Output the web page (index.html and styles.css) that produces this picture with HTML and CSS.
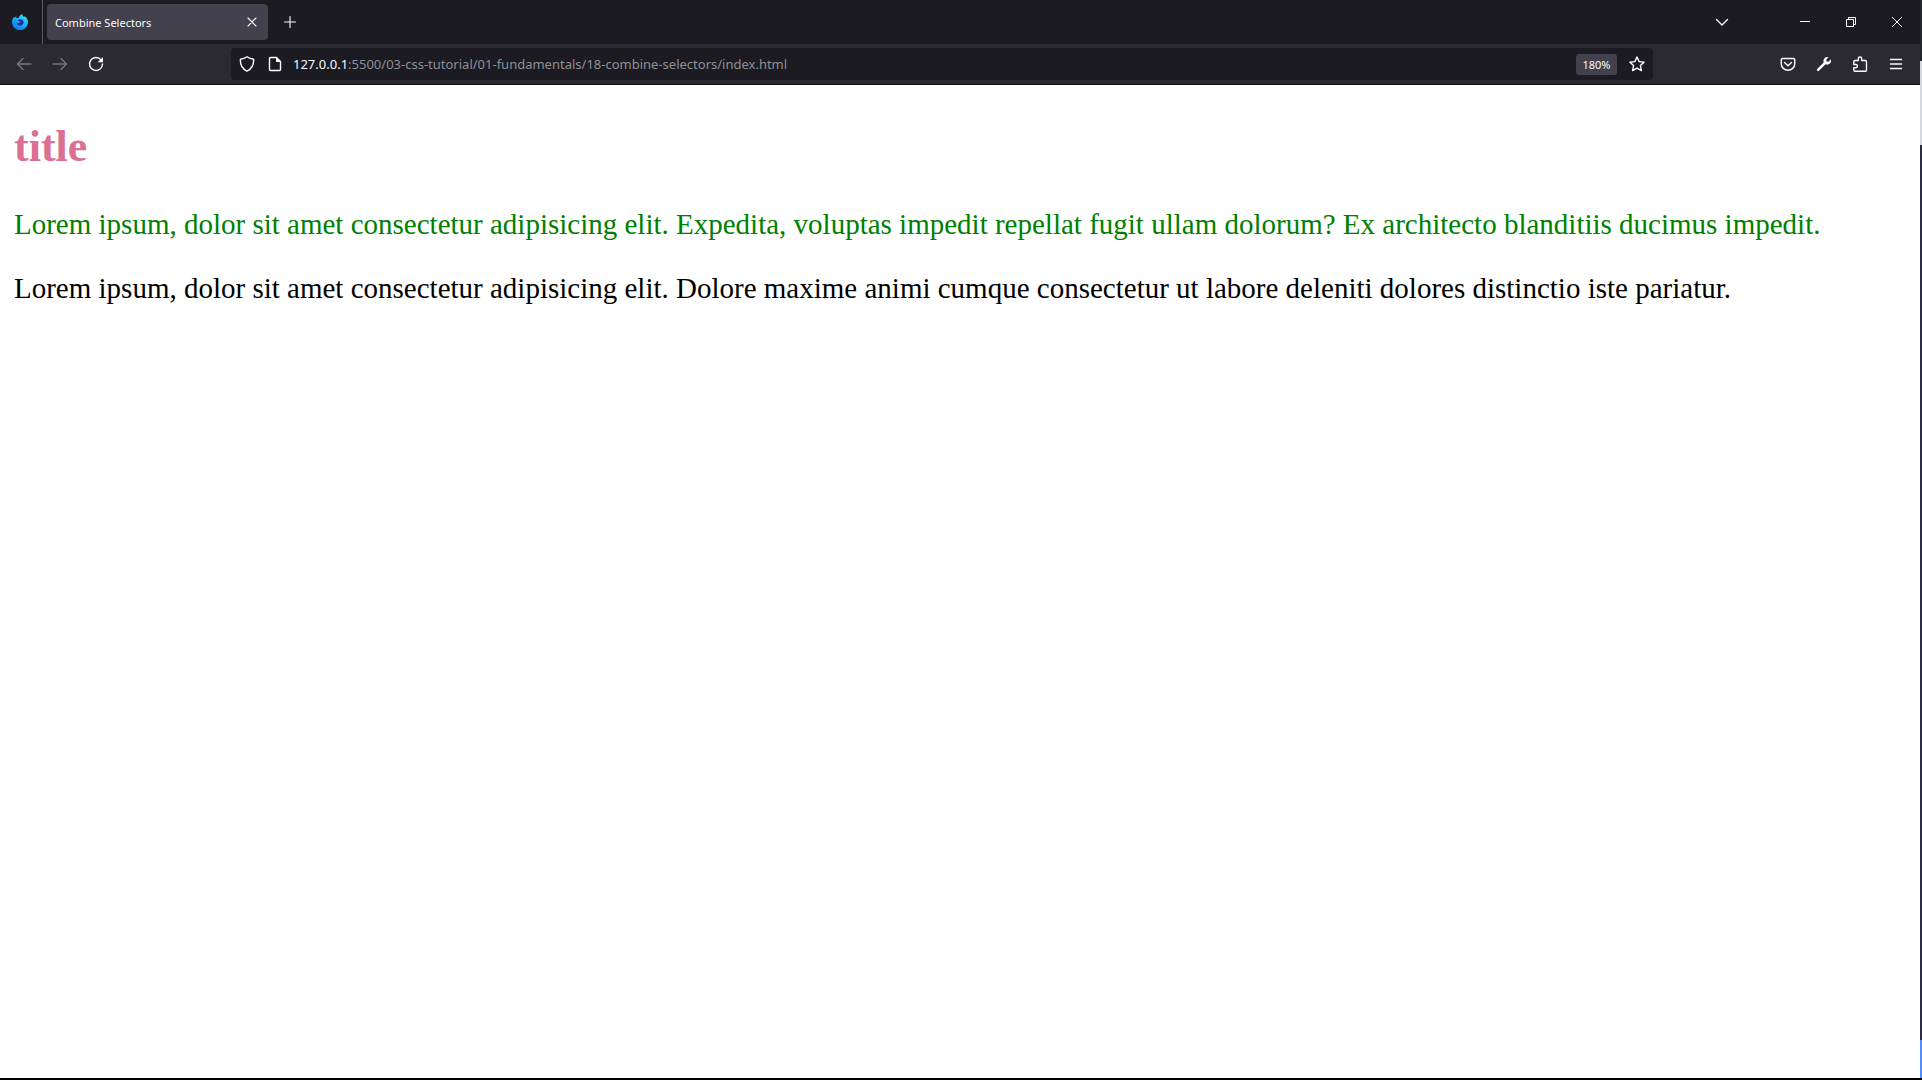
FILE: index.html
```html
<!DOCTYPE html>
<html lang="en">
<head>
<meta charset="utf-8">
<meta name="viewport" content="width=device-width, initial-scale=1">
<title>Combine Selectors</title>
<link rel="stylesheet" href="styles.css">
</head>
<body>
<div class="desktop">
  <div class="window">
    <header class="chrome">
      <div class="tab-bar">
        <div class="brand">
          <svg width="16" height="16" viewBox="0 0 16 16" aria-hidden="true">
            <defs>
              <linearGradient id="flame" x1="1" y1="0" x2="0.3" y2="1">
                <stop offset="0" stop-color="#5af5e0"/>
                <stop offset="0.4" stop-color="#22bdfb"/>
                <stop offset="1" stop-color="#0a78f0"/>
              </linearGradient>
            </defs>
            <path fill="url(#flame)" d="M10.2 0c.2 1.400.9 2.200 1.900 3.200.3-.4.400-.8.400-1.200C14.700 3.700 16 5.800 16 8.200 16 12.500 12.500 16 8 16S0 12.600 0 8.200C0 6 .7 4.200 1.700 2.900c0 .5.100.9.400 1.200.6-.9 1.300-1.500 2.200-1.900-.1.700 0 1.300.3 1.800h1.800c.8-1.600 1.800-3.100 3.800-4z"/>
            <path fill="#232a9c" d="M5.600 5.600c1 .1 1.900.3 2.400.1 1-.6 2.800-.2 3.400 1.400.8 2.200-.9 4.500-3.200 4.500-2 0-3.500-1.300-3.700-3 .8.700 1.900.8 2.700.2.500-.4 1.300-.4 1.300-.9-.1-.5-1.500-.2-1.900-.8-.3-.5-.5-1-1-1.500z"/>
          </svg>
        </div>
        <div class="tab">
          <span class="tab-title">Combine Selectors</span>
          <button class="tool tab-close" type="button" aria-label="Close tab">
            <svg class="icon light" width="10" height="10" viewBox="0 0 10 10"><path d="M1 1l8 8M9 1l-8 8"/></svg>
          </button>
        </div>
        <button class="tool" type="button" aria-label="New tab">
          <svg class="icon light" width="14" height="14" viewBox="0 0 14 14"><path d="M7 1.500v11M1.500 7h11"/></svg>
        </button>
        <button class="tool all-tabs" type="button" aria-label="List all tabs">
          <svg class="icon" width="14" height="14" viewBox="0 0 14 14"><path d="M1.500 4.500L7 10l5.500-5.500"/></svg>
        </button>
        <div class="caption">
          <button class="caption-button" type="button" aria-label="Minimize">
            <svg class="icon thin" width="10" height="10" viewBox="0 0 10 10"><path d="M0 4.500h10"/></svg>
          </button>
          <button class="caption-button" type="button" aria-label="Restore">
            <svg class="icon thin" width="10" height="10" viewBox="0 0 10 10"><path d="M.5 2.500h7v7h-7zM2.500 2.500v-2h7v7h-2"/></svg>
          </button>
          <button class="caption-button" type="button" aria-label="Close">
            <svg class="icon thin" width="10" height="10" viewBox="0 0 10 10"><path d="M0 0l10 10M10 0L0 10"/></svg>
          </button>
        </div>
      </div>
      <div class="nav-bar">
        <div class="nav-buttons">
          <button class="tool" type="button" aria-label="Back" disabled>
            <svg class="icon" width="16" height="16" viewBox="0 0 16 16"><path d="M15 8H1.500M7 2.500L1.500 8 7 13.500"/></svg>
          </button>
          <button class="tool" type="button" aria-label="Forward" disabled>
            <svg class="icon" width="16" height="16" viewBox="0 0 16 16"><path d="M1 8h13.500M9 2.500L14.500 8 9 13.500"/></svg>
          </button>
          <button class="tool" type="button" aria-label="Reload">
            <svg class="icon" width="16" height="16" viewBox="0 0 16 16"><path d="M13 3.800A6.500 6.500 0 1 0 14.500 8"/><path class="solid" d="M15 1v5.300h-5.300z"/></svg>
          </button>
        </div>
        <div class="url-bar">
          <svg class="icon" width="16" height="16" viewBox="0 0 16 16" aria-hidden="true"><path d="M8 .8c2 1.400 4.200 2.200 6.600 2.500.3 5.200-2.200 9.800-6.600 11.900C3.600 13.100 1.100 8.500 1.400 3.300 3.800 3 6 2.200 8 .8z"/></svg>
          <svg class="icon page-icon" width="16" height="16" viewBox="0 0 16 16" aria-hidden="true"><path d="M9.500 1.500H3.700a1.200 1.200 0 0 0-1.200 1.200v10.600a1.200 1.200 0 0 0 1.200 1.200h8.600a1.200 1.200 0 0 0 1.200-1.200V5.500z"/><path class="solid" d="M9 1v5h5z"/></svg>
          <a class="url" href="#"><span class="host">127.0.0.1</span>:5500/03-css-tutorial/01-fundamentals/18-combine-selectors/index.html</a>
          <button class="zoom-level" type="button">180%</button>
          <button class="tool star" type="button" aria-label="Bookmark this page">
            <svg class="icon" width="16" height="16" viewBox="0 0 16 16"><path d="M8 1l2.100 4.600 5 .6-3.700 3.400 1 5L8 12.100l-4.400 2.500 1-5L.9 6.200l5-.6z"/></svg>
          </button>
        </div>
        <div class="extras">
          <button class="tool" type="button" aria-label="Save to Pocket">
            <svg class="icon" width="16" height="16" viewBox="0 0 16 16"><path d="M2.500 2.500h11a1.200 1.200 0 0 1 1.200 1.200V8a6.700 6.200 0 0 1-13.400 0V3.700a1.200 1.200 0 0 1 1.200-1.200z"/><path d="M4.500 6.500L8 9.800l3.500-3.300"/></svg>
          </button>
          <button class="tool" type="button" aria-label="Developer tools">
            <svg class="icon" width="16" height="16" viewBox="0 0 16 16"><path class="solid" d="M14.900 3.300l-2.500 2.400-1.800-.3-.3-1.800L12.600 1.200a4 4 0 0 0-5 5.200L1.200 13a1.200 1.200 0 0 0 1.800 1.800l6.600-6.500a4 4 0 0 0 5.300-5z"/></svg>
          </button>
          <button class="tool" type="button" aria-label="Extensions">
            <svg class="icon" width="16" height="16" viewBox="0 0 16 16"><path d="M6.300 4.500V2.700a1.700 1.700 0 0 1 3.400 0v1.800h3.600a1.200 1.200 0 0 1 1.200 1.200v8.600a1 1 0 0 1-1 1H3a1.200 1.200 0 0 1-1.200-1.200v-2.400h2a1.500 1.500 0 0 0 0-3.200h-2V5.700A1.200 1.200 0 0 1 3 4.500z"/></svg>
          </button>
          <button class="tool" type="button" aria-label="Open menu">
            <svg class="icon" width="14" height="14" viewBox="0 0 14 14"><path d="M1.500 2.500h11M1.500 7h11M1.500 11.500h11"/></svg>
          </button>
        </div>
      </div>
    </header>
    <main class="document">
      <h1 class="title">title</h1>
      <p class="text highlight">Lorem ipsum, dolor sit amet consectetur adipisicing elit. Expedita, voluptas impedit repellat fugit ullam dolorum? Ex architecto blanditiis ducimus impedit.</p>
      <p class="text">Lorem ipsum, dolor sit amet consectetur adipisicing elit. Dolore maxime animi cumque consectetur ut labore deleniti dolores distinctio iste pariatur.</p>
    </main>
  </div>
  <div class="edge">
    <div class="edge-top"></div>
    <div class="edge-light"></div>
    <div class="edge-dark"></div>
    <div class="edge-blue"></div>
  </div>
</div>
</body>
</html>
```
FILE: styles.css
```css
* {
  box-sizing: border-box;
}

body {
  margin: 0;
  background: #fff;
  font-family: "Noto Sans", "Open Sans", sans-serif;
}

.desktop {
  display: flex;
  min-height: 100vh;
  border-bottom: 2px solid #000;
}

.window {
  flex: 1;
  min-width: 0;
}

.chrome {
  color: #fbfbfe;
  background: #2b2a33;
  border-bottom: 1px solid #0c0c0d;
}

.icon {
  display: block;
  flex: none;
  fill: none;
  stroke: currentColor;
  stroke-width: 1.4;
  stroke-linejoin: round;
  stroke-linecap: round;
}

.icon .solid {
  fill: currentColor;
  stroke: none;
}

.light {
  stroke-width: 1.1;
}

.thin {
  stroke-width: 1;
  stroke-linejoin: miter;
  stroke-linecap: butt;
}

.tool,
.caption-button {
  display: flex;
  flex: none;
  align-items: center;
  justify-content: center;
  width: 36px;
  height: 32px;
  padding: 0;
  border: 0;
  color: inherit;
  background: none;
}

.tool:disabled {
  color: #76757c;
}

.tab-bar {
  display: flex;
  align-items: center;
  height: 44px;
  background: #1c1b22;
}

.brand {
  display: flex;
  align-items: center;
  width: 43px;
  height: 44px;
  padding-left: 12px;
  border-right: 1px solid #5b5a61;
}

.tab {
  display: flex;
  align-items: center;
  justify-content: space-between;
  width: 221px;
  height: 36px;
  margin: 0 4px;
  padding: 0 4px 0 8px;
  border-radius: 4px;
  background: #42414d;
}

.tab-title {
  font-size: 11px;
  white-space: nowrap;
}

.tab-close {
  width: 24px;
}

.all-tabs {
  margin-left: auto;
}

.caption {
  display: flex;
  margin-left: 42px;
}

.caption-button {
  width: 46px;
}

.nav-bar {
  display: flex;
  align-items: center;
  height: 40px;
}

.nav-buttons {
  display: flex;
  flex: none;
  width: 231px;
  padding-left: 6px;
}

.url-bar {
  display: flex;
  flex: 1;
  align-items: center;
  min-width: 0;
  height: 32px;
  padding-left: 8px;
  border-radius: 4px;
  background: #1c1b22;
}

.page-icon {
  margin-left: 12px;
}

.url {
  flex: 1;
  min-width: 0;
  margin-left: 10px;
  overflow: hidden;
  color: #8f8f94;
  font-size: 13px;
  text-decoration: none;
  white-space: nowrap;
}

.host {
  color: #fbfbfe;
}

.zoom-level {
  width: 41px;
  height: 21px;
  padding: 0;
  border: 0;
  border-radius: 3px;
  color: #fbfbfe;
  background: #42414d;
  font-family: inherit;
  font-size: 11px;
}

.star {
  margin-left: 4px;
  width: 32px;
}

.extras {
  display: flex;
  flex: none;
  justify-content: flex-end;
  width: 267px;
  padding-right: 6px;
}

.document {
  padding: 37px 14px;
  font-family: "Liberation Serif", "Times New Roman", serif;
  font-size: 29px;
  line-height: 35px;
}

.title {
  margin: 0 0 35px;
  color: palevioletred;
  font-size: 44px;
  line-height: 50px;
}

.text {
  margin: 0 0 29px;
  color: #000;
}

.text.highlight {
  color: green;
}

.edge {
  display: flex;
  flex-direction: column;
  width: 2px;
}

.edge-top {
  height: 61px;
  background: #23262d;
}

.edge-light {
  height: 84px;
  background: #d5d8de;
}

.edge-dark {
  flex: 1;
  background: #2b2d3e;
}

.edge-blue {
  height: 38px;
  background: #528bff;
}
```
